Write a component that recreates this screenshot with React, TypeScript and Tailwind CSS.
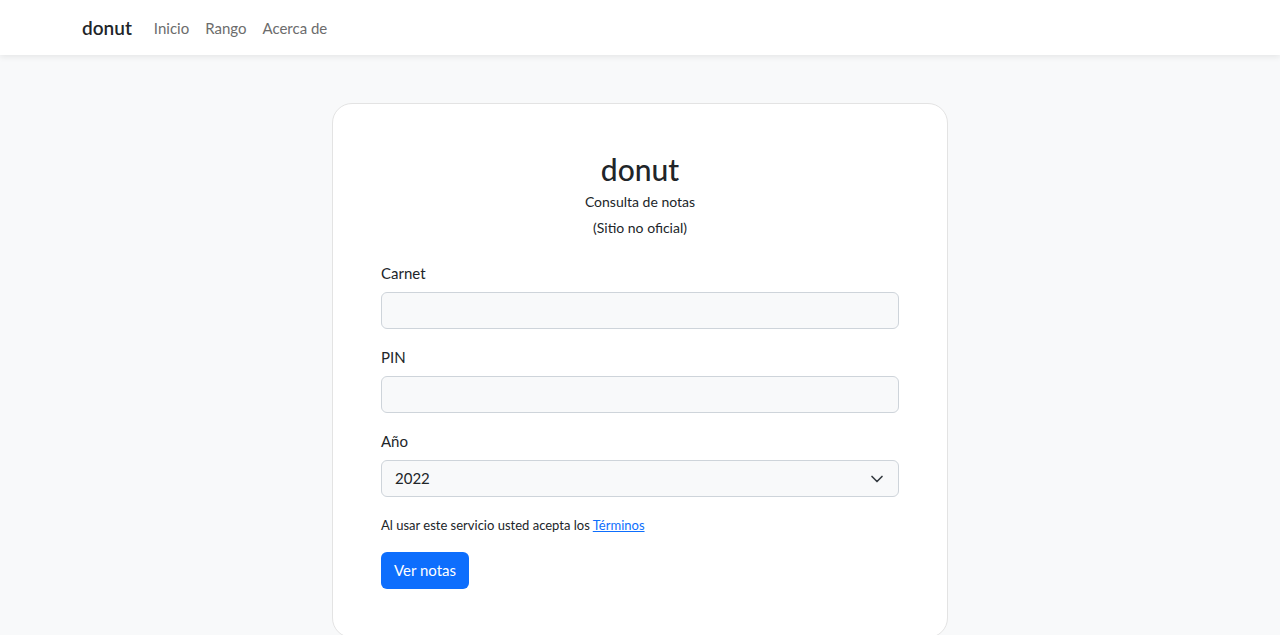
import React from "react";

const font = { fontFamily: "Lato, 'Noto Sans', sans-serif" };

function Field({ label, children }: { label: string; children: React.ReactNode }) {
  return (
    <div className="mb-4">
      <label className="block text-[15px] leading-6 text-[#212529] mb-[7px]">{label}</label>
      {children}
    </div>
  );
}

export default function App() {
  return (
    <div className="min-h-[635px] bg-[#f8f9fa] text-[#212529]" style={font}>
      {/* Navbar */}
      <nav className="h-[55px] bg-white shadow-[0_2px_6px_rgba(0,0,0,0.08)]">
        <div className="w-[1116px] mx-auto h-full flex items-center pt-[2px]">
          <span className="text-[19px] font-semibold text-[#212529] mr-[14px]">donut</span>
          <a className="px-2 text-[15px] text-[#6c6c6c]">Inicio</a>
          <a className="px-2 text-[15px] text-[#6c6c6c]">Rango</a>
          <a className="px-2 text-[15px] text-[#6c6c6c]">Acerca de</a>
        </div>
      </nav>

      {/* Card */}
      <div className="pt-12 flex justify-center">
        <div className="w-[616px] bg-white border border-[#e3e3e3] rounded-[20px] px-12 pt-[46px] pb-12">
          <div className="text-center">
            <h2 className="text-[30px] leading-[38px] font-medium text-[#212529]">donut</h2>
            <p className="mt-[1px] text-[14px] leading-[26px]">Consulta de notas</p>
            <p className="text-[14px] leading-[26px]">(Sitio no oficial)</p>
          </div>

          <div className="mt-[20px]">
            <Field label="Carnet">
              <input className="block w-full h-[37px] bg-[#f8f9fa] border border-[#ced4da] rounded-[6px] px-3 outline-none" />
            </Field>
            <Field label="PIN">
              <input
                type="password"
                className="block w-full h-[37px] bg-[#f8f9fa] border border-[#ced4da] rounded-[6px] px-3 outline-none"
              />
            </Field>
            <Field label="Año">
              <div className="relative h-[37px] bg-[#f8f9fa] border border-[#ced4da] rounded-[6px] flex items-center px-[13px]">
                <span className="text-[15px] text-[#212529]">2022</span>
                <svg
                  className="absolute right-[14px] top-[13px]"
                  width="14"
                  height="10"
                  viewBox="0 0 16 12"
                  fill="none"
                  stroke="#343a40"
                  strokeWidth="2"
                  strokeLinecap="round"
                  strokeLinejoin="round"
                >
                  <path d="M2 3l6 6 6-6" />
                </svg>
              </div>
            </Field>
          </div>

          <p className="mt-[18px] text-[13px] leading-5">
            Al usar este servicio usted acepta los{" "}
            <a className="text-[#0d6efd] underline">Términos</a>
          </p>

          <button className="mt-[17px] h-[37px] px-[13px] bg-[#0d6efd] text-white text-[15px] rounded-[6px]">
            Ver notas
          </button>
        </div>
      </div>
    </div>
  );
}
